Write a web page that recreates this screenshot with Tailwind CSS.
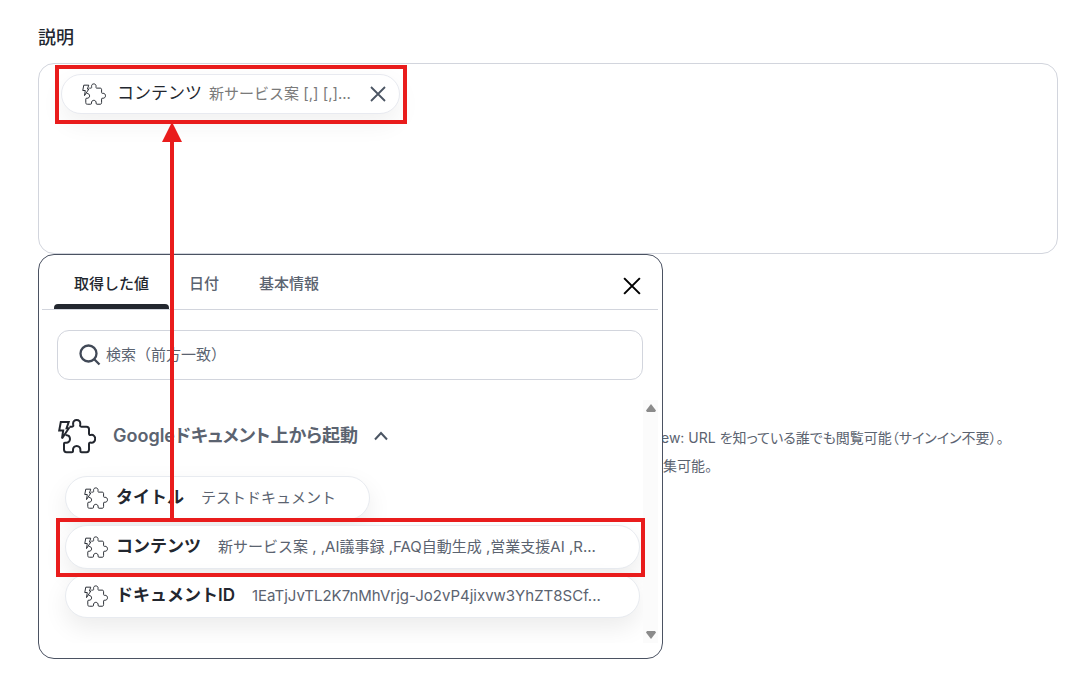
<!DOCTYPE html>
<html lang="ja">
<head>
    <meta charset="UTF-8">
    <meta name="viewport" content="width=device-width, initial-scale=1.0">
    <title>説明</title>
    <script src="https://cdn.jsdelivr.net/npm/@tailwindcss/browser@4"></script>
</head>
<body class="bg-white min-h-screen font-['Inter','Noto_Sans_CJK_JP',sans-serif] text-[#23272f]">
    <!-- shared icon shapes -->
    <svg class="hidden">
        <symbol id="puzzle" viewBox="0 0 38 36">
            <path d="M11.500 8.700H14C15.200 8.700 15.500 8 15.200 6.500C14.700 3.500 16.500 2 18.700 2S22.700 3.500 22.200 6.500C21.900 8 22.200 8.700 23.400 8.700H28.500C30.300 8.700 31 9.500 31 11.200V15.500C31 16.800 31.700 17.200 33 16.900C35.500 16.500 37.200 18.500 37.200 20.800S35.500 25 33 24.700C31.700 24.400 31 24.800 31 26V31.500C31 33.500 30.300 34.200 28.500 34.200H23.800C22.600 34.200 22.300 33.700 22.400 32.500C22.600 29.700 21 28 18.700 28S14.800 29.700 15 32.500C15.100 33.700 14.800 34.200 13.600 34.200H8.500C6.700 34.200 6 33.500 6 31.500V26C6 24.900 6.600 24.500 7.700 24.700C10.300 25 12 23.300 12 21S10.300 17 7.500 16.900" />
            <path d="M2.800 4H10.700L8.600 10.200H10.800L4 20.500L5.200 12.500H1.200Z" />
        </symbol>
        <symbol id="cross" viewBox="0 0 16 16">
            <path d="M1 1L15 15M15 1L1 15" />
        </symbol>
    </svg>

    <main class="pl-[38px] pr-[31px] pt-[24px]">
        <label for="description" class="block text-lg leading-[28px] font-medium">説明</label>

        <div class="relative mt-[11px]">
            <div id="description" class="h-[191px] border border-[#d2d5dd] rounded-2xl pl-[22px] pt-[10px]">
                <div class="inline-flex items-center h-[40px] pl-[20px] pr-[13px] rounded-full bg-white border border-[#e8eaf0] shadow-[0_10px_24px_rgba(0,0,0,0.06)]">
                    <svg class="w-6 h-6 fill-none stroke-[#23272f] stroke-[1.5]"><use href="#puzzle" /></svg>
                    <span class="ml-[11px] text-[17px] whitespace-nowrap">コンテンツ</span>
                    <span class="ml-[7px] text-[15px] text-[#7a7a7a] whitespace-nowrap">新サービス案 [,] [,]...</span>
                    <button class="ml-[19px] w-4 h-4" aria-label="削除">
                        <svg class="w-4 h-4 fill-none stroke-[#4b5563] stroke-[1.8]"><use href="#cross" /></svg>
                    </button>
                </div>
            </div>

            <div class="pt-[170px] pl-[623px] text-sm leading-[28px] text-[#5b6370] whitespace-nowrap">
                <p>ew: URL <span class="[font-feature-settings:'palt']">を知っている誰でも閲覧可能（サインイン不要）。</span></p>
                <p class="pl-[2px] [font-feature-settings:'palt']">集可能。</p>
            </div>

            <!-- value picker -->
            <section class="absolute left-0 top-[191px] w-[625px] pb-[15px] bg-white border border-[#4b5262] rounded-2xl">
                <header class="flex items-end ml-[3px] mr-[4px] h-[55px] pl-[12px] pr-[17px] border-b border-[#d2d5dd] text-[15px] font-medium text-[#5b6370]">
                    <nav class="flex h-full">
                        <button class="relative px-5 pt-[4px] text-[#23272f]">取得した値
                            <span class="absolute inset-x-0 bottom-0 h-[5px] rounded-t-sm bg-[#23272f]"></span>
                        </button>
                        <button class="px-5 pt-[4px]">日付</button>
                        <button class="px-5 pt-[4px]">基本情報</button>
                    </nav>
                    <button class="ml-auto mb-[14px] w-[18px] h-[18px]" aria-label="閉じる">
                        <svg class="w-[18px] h-[18px] fill-none stroke-black stroke-[1.8]"><use href="#cross" /></svg>
                    </button>
                </header>

                <div class="flex items-center mt-[20px] ml-[18px] mr-[19px] h-[50px] pl-[21px] pr-4 border border-[#d2d5dd] rounded-xl">
                    <svg class="w-[22px] h-[22px] fill-none stroke-[#414957] stroke-[2.3]" viewBox="0 0 22 22">
                        <circle cx="9.500" cy="9.500" r="8" />
                        <path d="M15.500 15.500L20.500 20.500" />
                    </svg>
                    <input type="text" aria-label="検索" placeholder="検索（前方一致）" class="ml-[5px] flex-1 text-[15px] outline-none placeholder:text-[#5b6370]">
                </div>

                <div class="flex mt-[20px] ml-[3px] mr-[4px] h-[243px]">
                    <div class="flex-1 min-w-0 overflow-hidden pl-[16px]">
                        <button class="flex items-center mt-[17px] h-[38px] text-[#5b6370]">
                            <svg class="w-[38px] h-[36px] fill-none stroke-[#23272f] stroke-2"><use href="#puzzle" /></svg>
                            <span class="ml-[17px] text-lg font-semibold">Google<span class="[font-feature-settings:'palt']">ドキュメント上から起動</span></span>
                            <svg class="ml-[16px] w-[14px] h-[10px] fill-none stroke-[#4b5563] stroke-2" viewBox="0 0 14 10">
                                <path d="M1 8.500L7 2L13 8.500" />
                            </svg>
                        </button>

                        <ul class="flex flex-col items-start gap-[5px] mt-[21px] pl-[7px]">
                            <li class="flex items-center h-[44px] w-[305px] pl-[18px] rounded-full bg-white border border-[#e8ebf0] shadow-[0_10px_24px_rgba(0,0,0,0.08)] whitespace-nowrap">
                                <svg class="w-6 h-6 fill-none stroke-[#23272f] stroke-[1.5]"><use href="#puzzle" /></svg>
                                <span class="ml-[8px] text-[17px] font-semibold">タイトル</span>
                                <span class="ml-[17px] text-[15px] text-[#5b6370]">テストドキュメント</span>
                            </li>
                            <li class="flex items-center h-[44px] w-[575px] pl-[18px] rounded-full bg-white border border-[#e8ebf0] shadow-[0_10px_24px_rgba(0,0,0,0.08)] whitespace-nowrap">
                                <svg class="w-6 h-6 fill-none stroke-[#23272f] stroke-[1.5]"><use href="#puzzle" /></svg>
                                <span class="ml-[8px] text-[17px] font-semibold">コンテンツ</span>
                                <span class="ml-[17px] text-[15px] text-[#5b6370]">新サービス案 , ,AI議事録 ,FAQ自動生成 ,営業支援AI ,R...</span>
                            </li>
                            <li class="flex items-center h-[44px] w-[575px] pl-[18px] rounded-full bg-white border border-[#e8ebf0] shadow-[0_10px_24px_rgba(0,0,0,0.08)] whitespace-nowrap">
                                <svg class="w-6 h-6 fill-none stroke-[#23272f] stroke-[1.5]"><use href="#puzzle" /></svg>
                                <span class="ml-[8px] text-[17px] font-semibold">ドキュメントID</span>
                                <span class="ml-[17px] text-[15px] text-[#5b6370]">1EaTjJvTL2K7nMhVrjg-Jo2vP4jixvw3YhZT8SCf...</span>
                            </li>
                        </ul>
                    </div>
                    <div class="flex flex-col justify-between items-center w-[15px] py-[4px] bg-[#fbfbfb]">
                        <svg class="w-[10px] h-[8px] fill-[#8b8b8b]" viewBox="0 0 10 8"><path d="M5 0L10 6.500L9 8H1L0 6.500Z" /></svg>
                        <svg class="w-[10px] h-[8px] fill-[#8b8b8b]" viewBox="0 0 10 8"><path d="M5 8L10 1.500L9 0H1L0 1.500Z" /></svg>
                    </div>
                </div>
            </section>

            <!-- red frames and the arrow between them -->
            <svg class="absolute left-0 top-0 w-[625px] h-[520px] pointer-events-none fill-none stroke-[#e91c1c] stroke-4" viewBox="0 0 625 520">
                <rect x="19" y="4" width="348" height="55" />
                <rect x="20" y="457" width="585" height="55" />
                <path d="M134 457V76" />
                <path d="M134 59L144 79H124Z" class="fill-[#e91c1c] stroke-0" />
            </svg>
        </div>
    </main>
</body>
</html>
